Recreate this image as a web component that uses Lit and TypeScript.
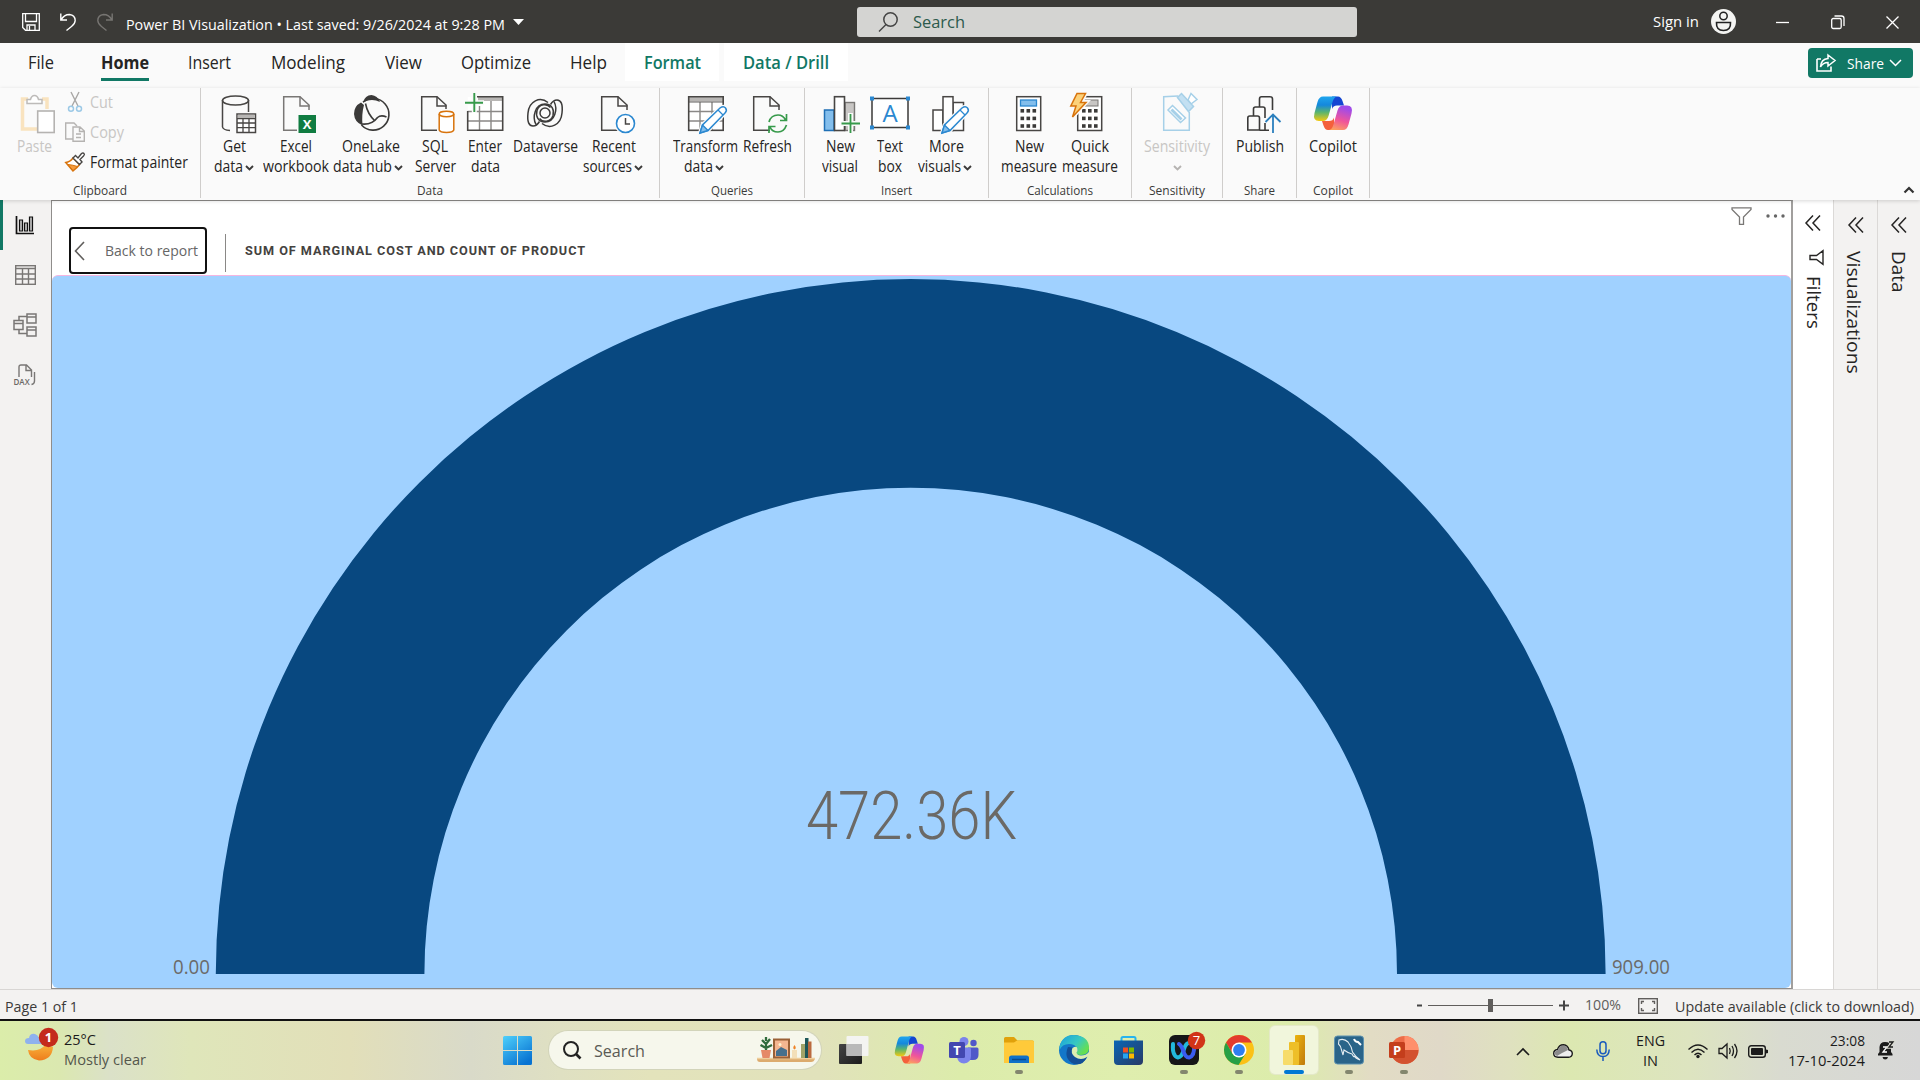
import { LitElement, html, svg, css, nothing } from "lit";
import { customElement, property } from "lit/decorators.js";

/** Text condensed or widened to a known width, so labels keep their column. */
@customElement("fit-text")
class FitText extends LitElement {
  @property({ type: Number }) w = 0;
  @property({ type: Boolean }) vertical = false;
  static styles = css`
    :host { display: inline-block; flex: none; white-space: nowrap; }
    :host([vertical]) { writing-mode: vertical-rl; }
    span { display: inline-block; transform-origin: 0 0; }
  `;
  updated() {
    const s = this.renderRoot.querySelector("span") as HTMLElement;
    const r = this.vertical ? s.offsetHeight : s.getBoundingClientRect().width;
    if (!this.w || !r) return;
    s.style.transform = this.vertical ? `scaleY(${this.w / r})` : `scaleX(${this.w / r})`;
    if (this.vertical) this.style.height = `${this.w}px`;
    else this.style.width = `${this.w}px`;
  }
  render() { return html`<span><slot></slot></span>`; }
}

const t = (text: string, w: number, cls = "") => html`<fit-text class=${cls} .w=${w}>${text}</fit-text>`;
const icon = (w: number, h: number, body: unknown, cls = "") =>
  html`<svg class=${cls} width=${w} height=${h} viewBox="0 0 ${w} ${h}" fill="none">${body}</svg>`;

const K = "#3b3a39";
const chev = (c = K) => icon(9, 6, svg`<path d="M1 1L4.5 4.5L8 1" stroke=${c} stroke-width="1.9"/>`, "chev");
const doc = (x = 6, w = 27, c = "#484644") => svg`
  <path d="M${x + w - 1} 18V13L${x + w - 10} 4.7H${x + 0.7}V38.3H${x + w - 10}" fill="none" stroke=${c} stroke-width="1.5"/>
  <path d="M${x + w - 10} 4.7V14H${x + w - 0.5}" stroke=${c} stroke-width="1.5"/>`;
const pencil = (x: number) => svg`
  <g transform="translate(${x} 0)"><path d="M0 41L2.5 33L20 16Q23.5 13.500 25.500 16Q27.500 18.500 25 21L8 38.500Z" fill="#fafafa" stroke="#fafafa" stroke-width="4"/>
  <path d="M0 41L2.5 33L20 16Q23.5 13.500 25.500 16Q27.500 18.500 25 21L8 38.500Z" fill="#fff" stroke="#2b88d0" stroke-width="1.5"/>
  <path d="M0 41L2.5 33L8 38.500Z" fill="#83beec" stroke="#2b88d0" stroke-width="1.4"/><path d="M18 18L23 23" stroke="#2b88d0" stroke-width="1.2"/></g>`;

const copilotMark = (id: string, k: string) => svg`
  <defs>
    <linearGradient id="${id}a" x1="0" y1="0" x2="0" y2="1"><stop offset="0" stop-color="#1fa5ee"/><stop offset=".35" stop-color="#1588dc"/><stop offset=".65" stop-color="#5cb56c"/><stop offset="1" stop-color="#f4c910"/></linearGradient>
    <linearGradient id="${id}b" x1="0.3" y1="0" x2="0" y2="1"><stop offset="0" stop-color="#a14be8"/><stop offset=".5" stop-color="#f0559a"/><stop offset="1" stop-color="#ffad55"/></linearGradient>
  </defs>
  <g transform=${k}>
    <path d="M19 4.500H25Q28 4.500 29.500 9L31 13.500H24Q20 13.500 19 17Z" fill="#1446d2"/>
    <path d="M21 38H15Q12 38 10.500 33.500L9 29H16Q20 29 21 25.500Z" fill="#f4603c"/>
    <path d="M10 4.500H24Q21 5 19.500 10L15.500 24Q14 29 10 29H6Q-0.500 29 1.500 21L4.500 10Q6 4.500 10 4.500Z" fill="url(#${id}a)"/>
    <path d="M30 38H16Q19 37.500 20.500 32.500L24.500 18.500Q26 13.500 30 13.500H34Q40.500 13.500 38.500 21.500L35.500 32.500Q34 38 30 38Z" fill="url(#${id}b)"/>
  </g>`;

const dots = (x: number, y: number) => [0, 1, 2].map((r) => [0, 1, 2].map((c) =>
  svg`<rect x=${x + c * 6} y=${y + r * 7.6} width="3.6" height="3.6" fill="#3b3a39"/>`));

const I: Record<string, unknown> = {
  get: svg`<path d="M7.500 8V35Q8 38 15 38.500M33.500 8V20" stroke="#484644" stroke-width="1.5"/><ellipse cx="20.500" cy="8.500" rx="13" ry="4.600" stroke="#484644" stroke-width="1.5"/>
    <rect x="22" y="22" width="18.500" height="18.500" fill="#fff" stroke="#484644" stroke-width="1.500"/><path d="M22.700 24.500H39.700" stroke="#b8b6b4" stroke-width="3.500"/><path d="M22 26.700H40M22 31H40M22 35.700H40M28 26V40M34 26V40" stroke="#484644" stroke-width="1.300"/>`,
  excel: svg`${doc(6, 27, "#797775")}<rect x="20" y="22" width="19" height="19" fill="#fafafa"/><rect x="21.500" y="23" width="17.500" height="18" fill="#107c41"/><text x="30.200" y="37.200" text-anchor="middle" class="gx">X</text>`,
  lake: svg`<path d="M15 10.500Q17 3 23.500 3Q29.500 3.500 32 10Q23.500 6 15 10.500Z" fill="#3b3a39"/><path d="M13 10.500Q6 14 6 22Q6.500 30 14.500 33.500Q13.500 22 16 13Z" fill="#3b3a39"/><path d="M15 10.200A15.800 15.800 0 1 1 13.500 33" stroke="#3b3a39" stroke-width="1.600"/><path d="M17.500 11.500Q19.500 22 27 29M14 32Q24 33 29.500 25.500Q33 22.500 38.500 25" stroke="#3b3a39" stroke-width="1.600"/>`,
  sql: svg`${doc(6, 26)}<rect x="22" y="17" width="18" height="25" fill="#fafafa"/><path d="M24.200 22V38Q25 40.500 31.500 40.500Q38 40.500 38.800 38V22" fill="#fff" stroke="#d8730c" stroke-width="1.500"/><ellipse cx="31.500" cy="22" rx="7.300" ry="2.700" fill="#fff" stroke="#d8730c" stroke-width="1.500"/>`,
  enter: svg`<rect x="2.700" y="5" width="35" height="33.500" fill="#fff"/><path d="M13 7H37.500" stroke="#b8b6b4" stroke-width="4"/><path d="M2.700 19.500H37.500M2.700 29H37.500M14.500 14V38M26 9V38" stroke="#8a8886" stroke-width="1.400"/><path d="M12 4.800H37.700V38.300H2.700V19" stroke="#484644" stroke-width="1.600"/><path d="M9.300 0V21M-1 10.700H19" stroke="#fafafa" stroke-width="5"/><path d="M9.300 1V20M0 10.700H18" stroke="#379a4b" stroke-width="1.900"/>`,
  verse: svg`<g stroke="#3b3a39" stroke-width="1.500"><path d="M23 10.500C15 4 4 9 3 21C2 30 4 34 8 34C11 34 13 32 14.500 29.500"/><path d="M17 31.500C25 38 36 33 37 21C38 12 36 8 32 8C29 8 27 10 25.500 12.500"/><path d="M29 9.500C33 17 30 30 20 30C13 30 10.500 24 12 18.500C14 12 22 11 25.500 15.500"/><path d="M11 32.500C7 25 10 12 20 12C27 12 29.500 18 28 23.500C26 30 18 31 14.500 26.500"/><circle cx="20" cy="21" r="5"/></g>`,
  recent: svg`${doc(7, 27)}<circle cx="31.500" cy="31.500" r="11" fill="#fafafa"/><circle cx="31.500" cy="31.500" r="9" fill="#fff" stroke="#2b88d0" stroke-width="1.600"/><path d="M31.500 26V32H36" stroke="#484644" stroke-width="1.500"/>`,
  transform: svg`<rect x="3.700" y="5" width="35" height="33.500" fill="#fff"/><path d="M4 7.500H38" stroke="#b8b6b4" stroke-width="4"/><path d="M4 19.500H38M4 29H38M15 10V38M27 10V38" stroke="#8a8886" stroke-width="1.400"/><path d="M4 10H38" stroke="#605e5c"/><rect x="3.700" y="4.800" width="34.500" height="33.500" stroke="#484644" stroke-width="1.600"/>${pencil(15)}`,
  refresh: svg`${doc(6, 27)}<circle cx="31" cy="31.500" r="10.500" fill="#fafafa"/><g stroke="#379a4b" stroke-width="1.700"><path d="M22 30Q24 23 31 23Q36 23 38.500 28M39.500 22V28.500H33M39.500 33Q37 40 31 40Q25 40 23 35M22 41V34.500H28.500"/></g>`,
  newvis: svg`<rect x="4.500" y="18" width="9.500" height="20.500" fill="#83beec" stroke="#1f6fb5" stroke-width="1.500"/><rect x="25" y="10.500" width="9.500" height="28" fill="#c8c6c4" stroke="#797775" stroke-width="1.400"/><rect x="14.500" y="4.700" width="10" height="33.800" fill="#fff" stroke="#484644" stroke-width="1.600"/><path d="M30.500 21V42M20.500 31.500H41" stroke="#fafafa" stroke-width="5"/><path d="M30.500 22V41M21.500 31.500H40" stroke="#379a4b" stroke-width="1.800"/>`,
  textbox: svg`<rect x="2" y="6.500" width="36" height="29" fill="#fff" stroke="#3b3a39" stroke-width="1.500"/>${[[0, 4.500], [36, 4.500], [0, 33.500], [36, 33.500]].map(([x, y]) => svg`<rect x=${x} y=${y} width="4" height="4" fill="#2b88d0"/>`)}<text x="20" y="29.500" text-anchor="middle" class="ga">A</text>`,
  morevis: svg`<g fill="#fff" stroke="#484644" stroke-width="1.500"><rect x="7" y="18" width="10" height="20.500"/><rect x="27" y="10.500" width="10.500" height="28"/><rect x="17" y="4.700" width="10" height="33.800"/></g>${pencil(16)}`,
  measure: svg`<rect x="6.700" y="4.700" width="24" height="33.800" fill="#fff" stroke="#484644" stroke-width="1.500"/><rect x="10.500" y="8" width="16" height="6" fill="#83beec" stroke="#2b88d0" stroke-width="1.300"/>${dots(10.500, 17)}`,
  quick: svg`<rect x="7.700" y="4.700" width="24" height="33.800" fill="#fff" stroke="#484644" stroke-width="1.500"/><rect x="15" y="8" width="13" height="6" fill="#c8c6c4" stroke="#797775"/>${dots(12, 17)}<path d="M7 1H16L11 10H16.500L2 26L5.500 14H0Z" fill="#fafafa" stroke="#fafafa" stroke-width="4"/><path d="M7 1.500H15.500L10.500 10.500H16L2.500 25L6 14H.8Z" fill="#fcd27a" stroke="#d8730c" stroke-width="1.500"/>`,
  sens: svg`<g stroke="#a6d0e8" stroke-width="1.500"><path d="M21 4L6.700 4.700V38.300H32.300V20" fill="#fafafa"/><path d="M15.500 13.500L28.500 26L23.500 30.500L11 18Z" fill="#fff"/><path d="M15.500 17.500L24.500 26.500L23.500 27.500L14.500 18.500Z"/><path d="M31 8L34 1.500L40 7.500L34 12Z" fill="#fff"/><path d="M20.500 5.500L24.500 1.500L36.500 14.500L31.500 19.500Z" fill="#c3e0f2"/></g>`,
  publish: svg`<g stroke="#3b3a39" stroke-width="1.600"><path d="M7.800 38V26Q7.800 24 9.800 24H17.500Q19.500 24 19.500 26V38Z"/><path d="M13.500 24V17Q13.500 15 15.500 15H23Q25 15 25 17V26M19.500 38.200H29M25 31V38"/><path d="M19.500 15V7Q19.500 4.800 21.500 4.800H30Q32.500 4.800 32.500 7V18"/></g><path d="M33 41V22.500M25.500 30L33 22.500L40.500 30" stroke="#2b7fbd" stroke-width="1.800"/>`,
  copilot: copilotMark("rc", ""),
};

type Btn = { w: number; i: string; a: [string, number]; b?: [string, number]; c?: boolean; off?: boolean; k?: string };
const groups: { cls: string; label: [string, number]; items: Btn[] }[] = [
  { cls: "g-data", label: ["Data", 26], items: [
    { w: 54, i: "get", a: ["Get", 23], b: ["data", 29], c: true, k: "nudge-l" },
    { w: 70, i: "excel", a: ["Excel", 32], b: ["workbook", 66], k: "nudge-l" },
    { w: 72, i: "lake", a: ["OneLake", 58], b: ["data hub", 59], c: true, k: "nudge-r" },
    { w: 62, i: "sql", a: ["SQL", 26], b: ["Server", 41] },
    { w: 38, i: "enter", a: ["Enter", 34], b: ["data", 29] },
    { w: 82, i: "verse", a: ["Dataverse", 65] },
    { w: 56, i: "recent", a: ["Recent", 44], b: ["sources", 49], c: true, k: "nudge-s" }] },
  { cls: "g-queries", label: ["Queries", 42], items: [
    { w: 68, i: "transform", a: ["Transform", 65], b: ["data", 29], c: true, k: "nudge-s" },
    { w: 56, i: "refresh", a: ["Refresh", 49] }] },
  { cls: "g-insert", label: ["Insert", 31], items: [
    { w: 48, i: "newvis", a: ["New", 29], b: ["visual", 36] },
    { w: 52, i: "textbox", a: ["Text", 26], b: ["box", 24] },
    { w: 60, i: "morevis", a: ["More", 35], b: ["visuals", 43], c: true, k: "nudge-s" }] },
  { cls: "g-calc", label: ["Calculations", 66], items: [
    { w: 58, i: "measure", a: ["New", 29], b: ["measure", 56], k: "nudge-l" },
    { w: 62, i: "quick", a: ["Quick", 38], b: ["measure", 56] }] },
  { cls: "g-sens", label: ["Sensitivity", 56], items: [{ w: 70, i: "sens", a: ["Sensitivity", 66], c: true, off: true }] },
  { cls: "g-share", label: ["Share", 31], items: [{ w: 60, i: "publish", a: ["Publish", 48] }] },
  { cls: "g-copilot", label: ["Copilot", 40], items: [{ w: 60, i: "copilot", a: ["Copilot", 48] }] },
];

const tabs: [string, number, string][] = [
  ["File", 26, "t1"], ["Home", 48, "t2"], ["Insert", 43, "t3"], ["Modeling", 74, "t4"], ["View", 37, "t5"],
  ["Optimize", 70, "t6"], ["Help", 37, "t7"], ["Format", 57, "ctx cf"], ["Data / Drill", 86, "ctx cd"],
];

const taskIcons: { run?: boolean; active?: boolean; body: unknown }[] = [
  { body: svg`<defs><linearGradient id="tv" x1="0" y1="0" x2="1" y2="1"><stop stop-color="#444"/><stop offset="1" stop-color="#1c1c1c"/></linearGradient></defs><rect y="9" width="23" height="20" rx="1" fill="url(#tv)"/><rect x="7.500" y="1" width="22" height="20" rx="1" fill="#f4f4f4" opacity=".95"/><rect x="7.500" y="9" width="15.500" height="12" fill="#b9b9b9"/>` },
  { body: copilotMark("tc", "translate(0 -2) scale(.77 .8)") },
  { body: svg`<circle cx="15" cy="6.500" r="4.500" fill="#7b83eb"/><circle cx="24.500" cy="8" r="3.200" fill="#5059c9"/><path d="M19 12.500H28Q29.500 12.500 29.500 14V20Q29.500 25 24 25H19Z" fill="#5059c9"/><path d="M8 12.500H20Q22 12.500 22 14V21Q22 28 15 28.500Q9 28 8 22Z" fill="#7b83eb"/><rect y="7" width="16" height="16" rx="1.500" fill="#4247b0"/><text x="8" y="19.500" text-anchor="middle" class="gt">T</text>` },
  { run: true, body: svg`<path d="M0 3.500Q0 2 1.500 2H10L13.500 5.500H28.500Q30 5.500 30 7V12H0Z" fill="#e0a10b"/><path d="M0 7.500H10L13 5.500H28.500Q30 5.500 30 7V28H0Z" fill="#ffca3a"/><path d="M5 28V23Q5 20.500 7.500 20.500H22.500Q25 20.500 25 23V28Z" fill="#1071c8"/><path d="M8 24.500H22" stroke="#0a4a8c" stroke-width="1.500"/>` },
  { body: svg`<defs><linearGradient id="e1" x1="0" y1="0" x2="1" y2=".6"><stop stop-color="#1a9fe0"/><stop offset=".6" stop-color="#38c9c0"/><stop offset="1" stop-color="#66e04e"/></linearGradient></defs><circle cx="15" cy="15" r="15" fill="#1377c9"/><path d="M.500 12Q3 0 15 0Q30 1 30 13Q30 20 22 20Q17 20 17 17.500Q19.500 16 18 13Q16 9 10 9Q3 9 .500 15Z" fill="url(#e1)"/><path d="M9 12Q4 24 15 29Q24 31 28 22Q21 26 16 22Q11 18 13.500 12.500Z" fill="#134f96"/><path d="M17.500 17.500Q18 20.500 22 20.500Q27 20.500 30 17L31 21L28 22Q22 26 16 22Q11 18 13.500 13Q18 10 18.500 14Q19 16 17.500 17.500Z" fill="#ddeeb0"/>` },
  { body: svg`<defs><linearGradient id="st" x1="0" y1="0" x2="1" y2="1"><stop stop-color="#0a66b5"/><stop offset="1" stop-color="#293a66"/></linearGradient></defs><path d="M7.500 7V3.500Q7.500 2 9 2H20Q21.500 2 21.500 3.500V7" stroke="#27b4ee" stroke-width="2"/><path d="M0 5.500H29V26Q29 30 25 30H4Q0 30 0 26Z" fill="url(#st)"/><path d="M9 12.500H14V17.500H9Z" fill="#f25022"/><path d="M15 12.500H20V17.500H15Z" fill="#7fba00"/><path d="M9 18.500H14V23.500H9Z" fill="#27a4f0"/><path d="M15 18.500H20V23.500H15Z" fill="#ffb900"/>` },
  { run: true, body: svg`<rect width="30" height="30" rx="6" fill="#161618"/><path d="M4 9Q3 21 9 22.500Q13 22 15 14Q17 8 20 8" stroke="#22b8dc" stroke-width="4" stroke-linecap="round"/><path d="M10 9Q12 10 14 15Q16 22.500 20 22.500Q26 21 25 10" stroke="#3a5cf0" stroke-width="4" stroke-linecap="round"/><circle cx="27.500" cy="5.500" r="8.700" fill="#d13418"/><text x="27.500" y="10" text-anchor="middle" class="g7">7</text>` },
  { run: true, body: svg`<circle cx="15" cy="15" r="15" fill="#fbc116"/><path d="M2 7.500A15 15 0 0 1 28 7.500H15L8.500 18.700Z" fill="#e33b2e"/><path d="M2 7.500A15 15 0 0 0 14.500 30L21.500 18.700L8.500 18.700Z" fill="#26a046"/><circle cx="15" cy="15" r="7.500" fill="#fff"/><circle cx="15" cy="15" r="5.900" fill="#2f7ef0"/>` },
  { run: true, active: true, body: svg`<defs><linearGradient id="pb" x1="0" y1="0" x2="1" y2="1"><stop stop-color="#ecb40e"/><stop offset="1" stop-color="#c07a0c"/></linearGradient></defs><rect x="16" width="10" height="30" rx="1" fill="url(#pb)"/><rect x="10" y="7" width="10" height="23" rx="1" fill="#eebf28"/><rect x="4" y="15" width="10" height="15" rx="1" fill="#f7dc6a"/>` },
  { run: true, body: svg`<rect x=".500" y="1" width="29" height="28" rx="3" fill="#2a6489" stroke="#5f93b0"/><path d="M5 5Q10 3 14 7Q18 12 18.500 17Q21 21 26 25Q21 23 20.500 21Q20 23 18 19Q14 18 10 15L9 20L7.500 15Q7 11 4.500 9Z" stroke="#e6eef3" stroke-width="1.100"/><path d="M20 4Q21 7 24 7L27 10" stroke="#fff" stroke-width="2"/>` },
  { run: true, body: svg`<circle cx="15.500" cy="15" r="14" fill="#ed6c47"/><path d="M15.500 1A14 14 0 0 1 29.500 15H15.500Z" fill="#ff8f6b"/><path d="M1.500 15H29.500A14 14 0 0 1 1.500 15Z" fill="#d35230"/><rect y="7" width="16" height="16" rx="1.500" fill="#c43e1c"/><text x="8" y="19.500" text-anchor="middle" class="gt">P</text>` },
];

@customElement("app-root")
class AppRoot extends LitElement {
  static styles = css`
    :host { display: flex; flex-direction: column; width: 1920px; height: 1080px; overflow: hidden; background: #f3f2f1; color: #252423; font-family: "Open Sans", "Noto Sans", sans-serif; font-size: 15px; line-height: 20px; box-sizing: border-box; }
    * { box-sizing: border-box; }
    svg { display: block; flex: none; overflow: visible; }
    .row { display: flex; align-items: center; }
    .titlebar { height: 43px; flex: none; background: #3b3a37; color: #fff; display: grid; grid-template-columns: 857px 500px 1fr; align-items: center; }
    .tl { padding: 1px 0 0 22px; }
    .tl .undo { margin-left: 20px; }
    .tl .redo { margin: 0 13px 0 21px; }
    .tl .title { margin-top: 3px; }
    .tl .caret { margin-left: 8px; }
    .search { height: 30px; background: #d4d4d2; border-radius: 3px; padding-left: 21px; color: #2c5a4c; font-size: 16.5px; gap: 15px; }
    .tr { padding-left: 296px; }
    .tr fit-text { margin-top: -1px; }
    .tr .avatar { margin-left: 12px; }
    .tr .min { margin-left: 40px; }
    .tr .res { margin-left: 41px; }
    .tr .x { margin-left: 41px; }

    .tabs { height: 45px; flex: none; background: #fafafa; display: flex; align-items: flex-start; }
    .tab { height: 38px; display: flex; flex: none; align-items: center; font-size: 17.5px; line-height: 24px; padding-bottom: 1px; }
    .t1 { margin-left: 28px; }
    .t2 { margin-left: 47px; font-weight: 700; border-bottom: 3px solid #117865; padding: 2px 0 0; }
    .t3 { margin-left: 39px; } .t4 { margin-left: 40px; } .t5 { margin-left: 40px; } .t6 { margin-left: 39px; } .t7 { margin-left: 39px; }
    .ctx { background: #fff; color: #117865; font-weight: 600; justify-content: center; }
    .cf { width: 94px; margin-left: 18px; }
    .cd { width: 124px; margin-left: 5px; }
    .share { margin: 5px 7px 0 auto; width: 105px; height: 30px; border-radius: 4px; background: #117865; color: #fff; padding-left: 8px; }
    .share fit-text { margin: -1px 5px 0 11px; }

    .ribbon { height: 112px; flex: none; background: #fafafa; display: flex; position: relative; z-index: 1; box-shadow: 0 1px 4px rgba(0,0,0,.16); font-size: 15.5px; }
    .group { height: 110px; border-right: 1px solid #cfcdcb; display: flex; flex-direction: column; justify-content: space-between; flex: none; }
    .btns { display: flex; justify-content: center; padding-top: 4px; }
    .btn { display: flex; flex-direction: column; align-items: center; flex: none; }
    .btn svg.big { margin-bottom: 2px; }
    .line { display: flex; align-items: center; justify-content: center; height: 20px; gap: 2px; flex: none; }
    .nudge-l .line { padding-right: 2px; }
    .nudge-r .line.first { padding-left: 5px; }
    .nudge-s .line.second { padding-right: 2px; }
    .chev { margin-top: 4px; }
    .off { color: #c8c6c4; }
    .glabel { display: flex; justify-content: center; font-size: 13px; line-height: 17px; height: 16px; color: #3b3a39; }
    .g-clip { width: 201px; }
    .g-data { width: 459px; } .g-data .btns { justify-content: flex-start; padding-left: 7px; }
    .g-queries { width: 145px; } .g-queries .btns { justify-content: flex-start; padding-left: 11px; }
    .g-insert { width: 184px; } .g-insert .btns { justify-content: flex-start; padding-left: 11px; }
    .g-calc { width: 143px; } .g-calc .btns { justify-content: flex-start; padding-left: 12px; }
    .g-sens { width: 91px; } .g-share { width: 74px; } .g-copilot { width: 73px; }
    .clip { display: flex; padding: 4px 0 0 15px; }
    .clip .line { margin-right: 2px; }
    .clipcol { display: flex; flex-direction: column; margin: -5px 0 0 10px; }
    .cliprow { height: 30px; display: flex; align-items: center; gap: 5px; }
    .cliprow fit-text { margin-top: -1px; }
    .collapse { margin: 98px 5px 0 auto; }
    .gx { font: 700 13px "Open Sans", sans-serif; fill: #fff; }
    .ga { font: 400 24px "Open Sans", sans-serif; fill: #2b88d0; }
    .gt { font: 700 13px "Open Sans", sans-serif; fill: #fff; }
    .g7 { font: 400 13px "Open Sans", sans-serif; fill: #fff; }
    .gd { font: 600 8px "Open Sans", sans-serif; fill: #6b6966; }

    .main { flex: 1; min-height: 0; display: grid; grid-template-columns: 51px 1742px 40px 44px 43px; border-bottom: 1px solid #d8d6d4; }
    .rail { display: flex; flex-direction: column; align-items: center; background: #f3f2f1; }
    .railitem { width: 51px; height: 50px; display: flex; align-items: center; justify-content: center; border-left: 3px solid transparent; padding: 0 4px 1px 0; }
    .railitem.on { border-color: #117865; }
    .canvas { background: #fff; border: 1px solid #8f8d8b; border-right: 2px solid #a19f9d; display: flex; flex-direction: column; min-width: 0; }
    .vhead { height: 74px; flex: none; display: flex; }
    .back { margin: 26px 0 0 17px; width: 138px; height: 47px; border: 2px solid #111; border-radius: 4px; display: flex; align-items: center; padding-left: 3px; color: #666; font-size: 15px; }
    .back fit-text { margin: -1px 0 0 20px; }
    .sep { width: 1px; height: 38px; margin: 33px 19px 0 18px; background: #8a8886; }
    .vtitle { margin-top: 39px; font: 700 13.500px/20px Roboto, sans-serif; letter-spacing: 1px; color: #444240; }
    .tools { margin: 5px 6px 0 auto; display: flex; gap: 14px; align-items: center; height: 20px; }
    .visual { flex: 1; min-height: 0; background: #a0d1ff; border-top: 1px solid #f5b5e0; border-radius: 6px; position: relative; }
    .visual svg { position: absolute; left: 0; top: 0; }
    .num { position: absolute; font-size: 19.500px; line-height: 26px; color: #6b6a68; }
    .zero { left: 121px; top: 678px; }
    .max { left: 1560px; top: 678px; }
    .value { position: absolute; left: 754px; top: 500px; font: 300 67.500px/80px Roboto, sans-serif; color: #6b6966; }
    .pane { background: #f3f2f1; border-left: 1px solid #dbd9d7; display: flex; flex-direction: column; align-items: center; padding-top: 17px; font-size: 18px; line-height: 22px; font-weight: 500; }
    .pane.filters { background: #fff; border: 0; padding-top: 15px; }
    .pane .dbl { margin-bottom: 18px; }
    .pane .fun { margin: 1px 0 11px 6px; }
    .pane.filters fit-text { margin-left: 2px; }
    .pane.viz fit-text { margin-right: 4px; }
    .pane.dat fit-text { margin-right: 1px; }

    .status { height: 29px; flex: none; display: flex; align-items: center; padding: 2px 6px 0 5px; color: #3b3a39; font-size: 15px; border-top: 1px solid #f3f2f1; }
    .zoom { margin-left: auto; display: flex; align-items: center; margin-top: -2px; color: #605e5c; font-size: 14.500px; }
    .zoom fit-text { margin-top: -1px; }
    .zoom .fit { margin: 2px 17px 0 17px; }
    .zoom .pct { margin-left: 15px; }
    .taskbar { height: 61px; flex: none; border-top: 2px solid #111; display: flex; align-items: flex-start; color: #1b1b1b; padding-top: 1px;
      background: linear-gradient(90deg, #dbedaa 0, #dbe8b0 60px, #dbe1c8 110px, #dfe6ba 190px, #e2dfb9 350px, #d9dac9 470px, #dfe0c2 560px, #e3e3bb 650px, #e1e2bb 820px, #dcecab 960px, #dfeeae 1120px, #dcecab 1290px, #e2dcc4 1370px, #e0d9c8 1440px, #dfe1bf 1510px, #dce8b1 1570px, #dde4c0 1690px, #d9dbd0 1780px, #d7d7d7 1920px); }
    .weather { margin: 11px 0 0 25px; width: 478px; display: flex; gap: 11px; }
    .wtext { display: flex; flex-direction: column; margin-top: -4px; }
    .wtext .sub { color: #54564c; }
    .start { margin-top: 14px; }
    .pill { margin: 9px 18px 0 17px; width: 272px; height: 38px; border-radius: 19px; background: #f6f7ec; box-shadow: 0 0 0 1px #d2d4ba; padding-left: 14px; font-size: 16.500px; color: #5b5b55; display: flex; align-items: center; }
    .pill fit-text { margin: 1px 112px 0 13px; }
    .apps { display: flex; gap: 7px; margin-left: -9px; }
    .app { width: 48px; height: 48px; margin-top: 4px; border-radius: 5px; display: flex; flex-direction: column; align-items: center; justify-content: space-between; padding-top: 9px; }
    .app.active { background: #f1f6dc; box-shadow: 0 0 0 1px #e4e9c8; }
    .dot { width: 8px; height: 4px; border-radius: 2px; background: #83866e; }
    .active .dot { width: 20px; background: #0078d4; }
    .tray { margin-left: auto; display: flex; align-items: center; height: 58px; padding-right: 26px; }
    .two { display: flex; flex-direction: column; align-items: center; margin-bottom: 3px; }
    .two.r { align-items: flex-end; }
    .tray .s1 { margin-right: 23px; } .tray .s2 { margin-right: 23px; } .tray .s3 { margin-right: 26px; }
    .tray .lang { margin-right: 23px; } .tray .s4 { margin-right: 10px; } .tray .s5 { margin-right: 10px; } .tray .s6 { margin-right: 20px; }
    .tray .time { margin-right: 12px; }
  `;

  private titlebar() {
    return html`<div class="titlebar">
      <div class="tl row">
        ${icon(18, 18, svg`<path d="M.700.700H17.300V17.300H3.500L.700 14.500ZM3.500.700V8.500H14.500V.700M5 17V12H13V17M7.500 13V17" stroke="#fff" stroke-width="1.300"/>`)}
        ${icon(16, 18, svg`<path d="M.800.500V7H7M1 7Q4 1.500 9.500 1.500Q15 2 15.200 7.500Q15 11 11.500 13.500L6.500 17.500" stroke="#fff" stroke-width="1.400"/>`, "undo")}
        ${icon(16, 18, svg`<path d="M15.200.500V7H9M15 7Q12 1.500 6.500 1.500Q1 2 .800 7.500Q1 11 4.500 13.500L9.500 17.500" stroke="#777572" stroke-width="1.400"/>`, "redo")}
        ${t("Power BI Visualization • Last saved: 9/26/2024 at 9:28 PM", 379, "title")}
        ${icon(11, 6, svg`<path d="M0 0H11L5.500 6Z" fill="#fff"/>`, "caret")}
      </div>
      <div class="search row">${icon(20, 20, svg`<circle cx="12.500" cy="7.500" r="6.700" stroke="#444" stroke-width="1.500"/><path d="M8 12.500L1 19.500" stroke="#444" stroke-width="1.500"/>`)}${t("Search", 52)}</div>
      <div class="tr row">${t("Sign in", 46)}
        ${icon(25, 25, svg`<circle cx="12.500" cy="12.500" r="12.500" fill="#f4f4f2"/><circle cx="12.500" cy="7" r="3.700" stroke="#222" stroke-width="1.500"/><path d="M5.500 13.500H19.500Q20 21.500 12.500 21.500Q5 21.500 5.500 13.500Z" stroke="#222" stroke-width="1.600"/>`, "avatar")}
        ${icon(14, 14, svg`<path d="M0 7.500H13" stroke="#fff" stroke-width="1.300"/>`, "min")}
        ${icon(14, 14, svg`<rect x=".700" y="3.500" width="9.500" height="10" rx="1.500" stroke="#fff" stroke-width="1.300"/><path d="M3.500 1H10.500Q13 1 13 3.500V11" stroke="#fff" stroke-width="1.300"/>`, "res")}
        ${icon(13, 14, svg`<path d="M.500 1.500L12.500 13.500M12.500 1.500L.500 13.500" stroke="#fff" stroke-width="1.300"/>`, "x")}
      </div>
    </div>`;
  }

  private ribbon() {
    return html`<div class="ribbon">
      <div class="group g-clip">
        <div class="clip">
          <div class="btn off">${icon(40, 42, svg`<path d="M13 7H7.500V37H22M27 7H32V17" stroke="#f9e3bf" stroke-width="3.500"/><path d="M12 11.500V7.500H15.500Q16.500 3.500 19.500 3.500Q22.500 3.500 23.500 7.500H27V11.500Z" fill="#fff" stroke="#bdbbb9" stroke-width="1.500"/><rect x="22.700" y="19" width="16.500" height="21.500" fill="#fff" stroke="#b5b3b1" stroke-width="1.600"/>`, "big")}<div class="line">${t("Paste", 35)}</div></div>
          <div class="clipcol">
            <div class="cliprow off">${icon(20, 20, svg`<path d="M6 0L13 14M14 0L7 14" stroke="#a9a7a5" stroke-width="1.400"/><circle cx="6" cy="16.700" r="2.500" stroke="#9cc9e6" stroke-width="1.500"/><circle cx="14" cy="16.700" r="2.500" stroke="#9cc9e6" stroke-width="1.500"/>`)}${t("Cut", 23)}</div>
            <div class="cliprow off">${icon(20, 20, svg`<path d="M8 17H.700V1H9L12 4" stroke="#b5b3b1" stroke-width="1.400"/><path d="M8 5H15L19.300 9V19.300H8ZM14.500 5V9.500H19M11 12H16M11 15.500H16" stroke="#b5b3b1" stroke-width="1.400"/>`)}${t("Copy", 34)}</div>
            <div class="cliprow">${icon(20, 20, svg`<path d="M.800 10.500Q5 10 8 6L14.500 12.500Q12 16 8 19Z" fill="#fff" stroke="#d8730c" stroke-width="1.500"/><path d="M3 12.500Q8 13 12.500 14.500L8 18.500Z" fill="#f59b3c" stroke="#d8730c"/><path d="M8 6L10.500 3.500L13 6L16.500 1.500Q18 .300 19 1.500Q20 2.500 18.500 4L15 7.500L17 10L14.500 12.500Z" fill="#fff" stroke="#484644" stroke-width="1.400"/>`)}${t("Format painter", 98)}</div>
          </div>
        </div>
        <div class="glabel">${t("Clipboard", 54)}</div>
      </div>
      ${groups.map((g) => html`<div class="group ${g.cls}">
        <div class="btns">${g.items.map((b) => html`<div class="btn ${b.off ? "off" : ""} ${b.k ?? ""}" style="width:${b.w}px">
          ${icon(40, 42, I[b.i], "big")}
          <div class="line first">${t(b.a[0], b.a[1])}</div>
          ${b.b || b.c ? html`<div class="line second">${b.b ? t(b.b[0], b.b[1]) : nothing}${b.c ? chev(b.off ? "#b5b3b1" : K) : nothing}</div>` : nothing}
        </div>`)}</div>
        <div class="glabel">${t(g.label[0], g.label[1])}</div>
      </div>`)}
      ${icon(12, 8, svg`<path d="M1.500 6.500L6 2L10.500 6.500" stroke="#333" stroke-width="2.200"/>`, "collapse")}
    </div>`;
  }

  private main() {
    const dbl = icon(16, 16, svg`<path d="M8 .500L1 8L8 15.500M15 .500L8 8L15 15.500" stroke="#252423" stroke-width="1.500"/>`, "dbl");
    const cx = 858.7, base = 698, R = 694.9, r = 486.3;
    return html`<div class="main">
      <div class="rail">
        <div class="railitem on">${icon(20, 20, svg`<path d="M1.500 1V18.500H19" stroke="#111" stroke-width="1.700"/><g fill="#bbb" stroke="#111" stroke-width="1.200"><path d="M4.500 5H7.500V16H4.500Z"/><path d="M9.500 8H12.500V16H9.500Z"/><path d="M14.500 2H17.500V16H14.500Z"/></g>`)}</div>
        <div class="railitem">${icon(21, 20, svg`<rect x=".700" y=".700" width="19.600" height="18.600" stroke="#797775" stroke-width="1.400"/><path d="M1 3.500H20M1 9H20M1 14H20M7.500 4V19M13.500 4V19" stroke="#797775" stroke-width="1.400"/>`)}</div>
        <div class="railitem">${icon(24, 24, svg`<g stroke="#797775" stroke-width="1.500"><rect x="1" y="7.500" width="9" height="9"/><path d="M1 10.500H10"/><rect x="14" y="1" width="9" height="9"/><path d="M14 4H23"/><rect x="14" y="14" width="9" height="9"/><path d="M14 17H23M6 7V3.500H14M6 17V20.500H14"/></g>`)}</div>
        <div class="railitem">${icon(22, 22, svg`<path d="M5 13V3Q5 1 7 1H12.500L17.500 6V13M12 1V6.500H17.500M20.500 8V17Q20.500 20 17.500 20.500" stroke="#797775" stroke-width="1.400"/><text x="-.500" y="20.500" class="gd">DAX</text>`)}</div>
      </div>
      <div class="canvas">
        <div class="vhead">
          <div class="back">${icon(11, 20, svg`<path d="M10 1L1.500 10L10 19" stroke="#605e5c" stroke-width="1.600"/>`)}${t("Back to report", 93)}</div>
          <div class="sep"></div>
          ${t("SUM OF MARGINAL COST AND COUNT OF PRODUCT", 341, "vtitle")}
          <div class="tools">${icon(21, 18, svg`<path d="M1 .800H20V2.500L12.500 10V17.300H8.500V10L1 2.500Z" stroke="#797775" stroke-width="1.300"/>`)}${icon(19, 4, svg`<g fill="#666"><circle cx="2" cy="2" r="1.700"/><circle cx="9.500" cy="2" r="1.700"/><circle cx="17" cy="2" r="1.700"/></g>`)}</div>
        </div>
        <div class="visual">
          ${icon(1739, 712, svg`<path d="M${cx - R} ${base}A${R} ${R} 0 0 1 ${cx + R} ${base}H${cx + r}A${r} ${r} 0 0 0 ${cx - r} ${base}Z" fill="#084880"/>`)}
          ${t("0.00", 37, "num zero")}${t("472.36K", 211, "value")}${t("909.00", 58, "num max")}
        </div>
      </div>
      <div class="pane filters">${dbl}${icon(15, 15, svg`<path d="M14 .700V14.300L7.500 9.500H1V5.500H7.500Z" stroke="#252423" stroke-width="1.400"/>`, "fun")}<fit-text vertical .w=${53}>Filters</fit-text></div>
      <div class="pane viz">${dbl}<fit-text vertical .w=${123}>Visualizations</fit-text></div>
      <div class="pane dat">${dbl}<fit-text vertical .w=${41}>Data</fit-text></div>
    </div>`;
  }

  private bottom() {
    return html`<div class="status">${t("Page 1 of 1", 73)}
      <div class="zoom">
        ${icon(153, 14, svg`<path d="M0 7.500H5M142 7.500H152M147 2.500V12.500" stroke="#444" stroke-width="2"/><path d="M11 7.500H136" stroke="#605e5c" stroke-width="1.200"/><rect x="71" y="1" width="5" height="13" fill="#605e5c"/>`)}
        ${t("100%", 36, "pct")}
        ${icon(20, 16, svg`<rect x=".700" y=".700" width="18.600" height="14.600" stroke="#605e5c" stroke-width="1.400"/><path d="M3.500 6V3.500H6M14 3.500H16.500V6M16.500 10V12.500H14M6 12.500H3.500V10" stroke="#605e5c" stroke-width="1.400"/>`, "fit")}
      </div>
      ${t("Update available (click to download)", 239)}
    </div>
    <div class="taskbar">
      <div class="weather">
        ${icon(28, 30, svg`<defs><linearGradient id="mo" x1="0" y1="0" x2="0" y2="1"><stop stop-color="#f8b13a"/><stop offset="1" stop-color="#ee7d1c"/></linearGradient></defs><path d="M3 11Q0 11 0 8Q0 5 4 5Q5 0 10 1Q13 2 14 5L18 11Z" fill="#8fb2ee"/><path d="M20 12Q15 19 3 17Q4 26 14 27.500Q27 27 28 14Z" fill="url(#mo)"/><circle cx="23.500" cy="4.500" r="9.700" fill="#c42b1c"/><text x="23.500" y="9.300" text-anchor="middle" class="gt">1</text>`)}
        <div class="wtext">${t("25°C", 32)}${t("Mostly clear", 82, "sub")}</div>
      </div>
      ${icon(29, 29, svg`<defs><linearGradient id="w" gradientUnits="userSpaceOnUse" x1="0" y1="0" x2="20" y2="29"><stop stop-color="#4fd0fb"/><stop offset="1" stop-color="#0873d2"/></linearGradient></defs><path d="M0 1.500Q0 0 1.500 0H14V14H0ZM15 0H27.500Q29 0 29 1.500V14H15ZM0 15H14V29H1.500Q0 29 0 27.500ZM15 15H29V27.500Q29 29 27.500 29H15Z" fill="url(#w)"/>`, "start")}
      <div class="pill">
        ${icon(18, 18, svg`<circle cx="8" cy="8" r="7" stroke="#222" stroke-width="2"/><path d="M13 13L17.500 17.500" stroke="#222" stroke-width="2.600"/>`)}
        ${t("Search", 51)}
        ${icon(58, 26, svg`<path d="M0 21.500H58Q57 25 54 25H3Q0 25 0 21.500Z" fill="#dcab6e"/><path d="M0 21.500H58" stroke="#efcf9c" stroke-width="1.500"/><path d="M4 13H14L12.500 21H5.500Z" fill="#e58a68"/><path d="M9 13V5M9 11L3.500 8M9 11L15 8M9 7L5 3M9 7L13 2M9 4V0" stroke="#2f6b3c" stroke-width="2.300"/><rect x="17" y="2.500" width="15" height="18" fill="#f5b690" stroke="#9a6036" stroke-width="2"/><path d="M19 14L24 10L30 13V19H19Z" fill="#47708c"/><circle cx="23" cy="7.500" r="1.500" fill="#fff2cf"/><path d="M35 13H40V21H35Z" fill="#f3dfb8"/><path d="M37.500 8Q40 11.500 37.500 12.500Q35 11.500 37.500 8Z" fill="#f08426"/><path d="M44 7H48V21H44Z" fill="#a2a468"/><path d="M48 1H51.500V21H48Z" fill="#1e5759"/><path d="M51 4.500H54.500V21H51Z" fill="#bb6a3f"/>`)}
      </div>
      <div class="apps">${taskIcons.map((a) => html`<div class="app ${a.active ? "active" : ""}">${icon(30, 30, a.body)}${a.run ? html`<span class="dot"></span>` : nothing}</div>`)}</div>
      <div class="tray">
        ${icon(14, 9, svg`<path d="M1 8L7 2L13 8" stroke="#1b1b1b" stroke-width="1.600"/>`, "s1")}
        ${icon(20, 14, svg`<path d="M5 13.300Q.700 13 .700 9.500Q.700 6 4.500 5.500Q6 .700 10.500.700Q15 1 16 6Q19.300 6.500 19.300 9.700Q19 13 15.500 13.300Z" fill="#eee" stroke="#1b1b1b" stroke-width="1.400"/><path d="M1.500 10Q1.500 6.500 5 6Q6 1.500 10.500 1.500Q14 1.500 15 6L9 9L4 12Z" fill="#8b8b8b"/>`, "s2")}
        ${icon(14, 20, svg`<rect x="4" y=".700" width="6" height="12" rx="3" stroke="#185abd" stroke-width="1.500"/><path d="M.800 8.500Q1 15.500 7 15.500Q13 15.500 13.200 8.500M7 15.500V20" stroke="#185abd" stroke-width="1.500"/>`, "s3")}
        <div class="two lang">${t("ENG", 29)}${t("IN", 15)}</div>
        ${icon(20, 14, svg`<g stroke="#1b1b1b" stroke-width="1.400"><path d="M.500 5.500Q10-3.500 19.500 5.500M3.500 8.500Q10 2 16.500 8.500M6.500 11Q10 7.500 13.500 11"/></g><circle cx="10" cy="12.500" r="1.700" fill="#1b1b1b"/>`, "s4")}
        ${icon(20, 16, svg`<path d="M1 5.500H4L9 1V15L4 10.500H1Z" stroke="#1b1b1b" stroke-width="1.300"/><path d="M11.500 5Q13 8 11.500 11M14 3Q17 8 14 13M16.500 1Q21.500 8 16.500 15" stroke="#1b1b1b" stroke-width="1.300"/>`, "s5")}
        ${icon(20, 13, svg`<rect x=".700" y=".700" width="16.600" height="11.600" rx="2.500" stroke="#1b1b1b" stroke-width="1.400"/><rect x="3" y="3" width="12" height="7" rx="1" fill="#1b1b1b"/><path d="M18 4.500L20 5V8L18 8.500Z" fill="#1b1b1b"/>`, "s6")}
        <div class="two r time">${t("23:08", 35)}${t("17-10-2024", 77)}</div>
        ${icon(17, 20, svg`<path d="M1 14.500V13L2.500 11V6Q3 1 8 1Q14 1 14 6V11L15.500 13V14.500ZM5.500 16H11Q10.500 18.500 8.200 18.500Q6 18.500 5.500 16Z" fill="#1b1b1b"/><path d="M6 6H10L6 11H10" stroke="#fff" stroke-width="1.300"/><path d="M12 1H16L12 6H16" stroke="#dadbd2" stroke-width="3.500"/><path d="M12 1H16L12 6H16" stroke="#1b1b1b" stroke-width="1.300"/>`)}
      </div>
    </div>`;
  }

  render() {
    return html`${this.titlebar()}
      <div class="tabs">${tabs.map(([n, w, c]) => html`<div class="tab ${c}">${t(n, w)}</div>`)}
        <div class="share row">${icon(20, 18, svg`<path d="M1 5V17H15V12.500M1 5H5" stroke="#fff" stroke-width="1.600"/><path d="M12 1L19 6.500L12 12V8.500Q7 8.500 4.500 13Q5 5 12 4.500Z" stroke="#fff" stroke-width="1.500"/>`)}${t("Share", 37)}${icon(13, 8, svg`<path d="M1 1L6.500 6.500L12 1" stroke="#fff" stroke-width="1.500"/>`)}</div>
      </div>
      ${this.ribbon()}${this.main()}${this.bottom()}`;
  }
}
